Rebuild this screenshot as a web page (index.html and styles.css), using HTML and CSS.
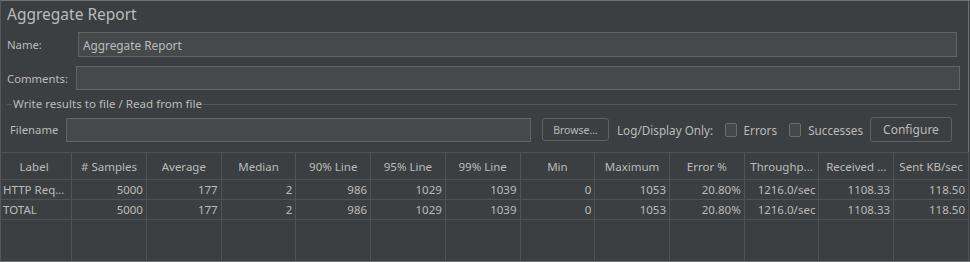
FILE: index.html
```html
<!DOCTYPE html>
<html lang="en">
<head>
    <meta charset="UTF-8">
    <title>Aggregate Report</title>
    <link rel="stylesheet" href="styles.css">
</head>
<body>
    <div class="window">
        <div class="settings">
            <h1 class="title">Aggregate Report</h1>

            <div class="form-row name-row">
                <label class="row-label">Name:</label>
                <input class="field" type="text" value="Aggregate Report">
            </div>
            <div class="form-row comments-row">
                <label class="row-label">Comments:</label>
                <input class="field" type="text">
            </div>

            <fieldset class="file-box">
                <legend>Write results to file / Read from file</legend>
                <div class="file-row">
                    <label class="file-label">Filename</label>
                    <input class="field file-field" type="text">
                    <button class="btn browse-btn">Browse...</button>
                    <span class="log-label">Log/Display Only:</span>
                    <label class="check check-errors"><span class="box"></span>Errors</label>
                    <label class="check check-successes"><span class="box"></span>Successes</label>
                    <button class="btn configure-btn">Configure</button>
                </div>
            </fieldset>
        </div>

        <table class="report">
            <thead>
                <tr>
                    <th>Label</th>
                    <th># Samples</th>
                    <th>Average</th>
                    <th>Median</th>
                    <th>90% Line</th>
                    <th>95% Line</th>
                    <th>99% Line</th>
                    <th>Min</th>
                    <th>Maximum</th>
                    <th>Error %</th>
                    <th>Throughp...</th>
                    <th>Received ...</th>
                    <th>Sent KB/sec</th>
                </tr>
            </thead>
            <tbody>
                <tr>
                    <td class="name">HTTP Req...</td>
                    <td>5000</td>
                    <td>177</td>
                    <td>2</td>
                    <td>986</td>
                    <td>1029</td>
                    <td>1039</td>
                    <td>0</td>
                    <td>1053</td>
                    <td>20.80%</td>
                    <td>1216.0/sec</td>
                    <td>1108.33</td>
                    <td>118.50</td>
                </tr>
                <tr>
                    <td class="name">TOTAL</td>
                    <td>5000</td>
                    <td>177</td>
                    <td>2</td>
                    <td>986</td>
                    <td>1029</td>
                    <td>1039</td>
                    <td>0</td>
                    <td>1053</td>
                    <td>20.80%</td>
                    <td>1216.0/sec</td>
                    <td>1108.33</td>
                    <td>118.50</td>
                </tr>
                <tr class="filler">
                    <td></td><td></td><td></td><td></td><td></td><td></td><td></td>
                    <td></td><td></td><td></td><td></td><td></td><td></td>
                </tr>
            </tbody>
        </table>
    </div>
</body>
</html>
```

FILE: styles.css
```css
body {
    margin: 0;
    background-color: #3c3f41;
    font-family: "Noto Sans", "Open Sans", sans-serif;
    font-size: 12px;
    color: #bbbbbb;
}
.window {
    width: 970px;
    height: 262px;
    overflow: hidden;
    box-sizing: border-box;
    border-top: 1px solid #6e7072;
    border-bottom: 1px solid #6e7072;
    border-left: 1px solid #55585a;
}
.settings {
    width: 967px;
    height: 151px;
    border-right: 1px solid #6e7072;
}
.title {
    margin: 0;
    padding: 3px 0 0 6px;
    height: 28px;
    font-size: 15.5px;
    font-weight: normal;
    line-height: 21px;
    color: #bbbbbb;
}
.form-row {
    display: flex;
    align-items: center;
    padding-left: 6px;
}
.form-row > * {
    flex-shrink: 0;
}
.row-label {
    font-size: 11.3px;
}
.field {
    box-sizing: border-box;
    background-color: #45494a;
    border: 1px solid #646464;
    color: #bbbbbb;
    font-family: inherit;
    font-size: 11.8px;
    padding: 0 4px;
    outline: none;
}
.name-row {
    height: 25px;
}
.name-row .row-label {
    width: 71px;
}
.name-row .field {
    width: 879px;
    height: 25px;
}
.comments-row {
    height: 24px;
    margin-top: 9px;
}
.comments-row .row-label {
    width: 69px;
}
.comments-row .field {
    width: 884px;
    height: 24px;
}
.file-box {
    margin: 6px 0 0 6px;
    width: 950px;
    padding: 0;
    border: none;
    border-top: 1px solid #56595b;
}
.file-box legend {
    padding: 0 1px;
    margin-left: 5px;
    font-size: 11.6px;
    line-height: 16px;
}
.file-row {
    display: flex;
    align-items: center;
    height: 25px;
    margin-top: 5px;
    white-space: nowrap;
}
.file-row > * {
    flex-shrink: 0;
}
.file-label {
    width: 56px;
    padding-left: 3px;
    font-size: 11.3px;
}
.file-field {
    width: 465px;
    height: 24px;
}
.btn {
    box-sizing: border-box;
    background-color: #3c3f41;
    border: 1px solid #5e6060;
    border-radius: 3px;
    color: #bbbbbb;
    font-family: inherit;
    padding: 0;
}
.browse-btn {
    width: 67px;
    height: 23px;
    margin-left: 11px;
    font-size: 10.5px;
}
.log-label {
    width: 96px;
    margin-left: 8px;
    font-size: 11.7px;
}
.check {
    display: flex;
    align-items: center;
    margin-left: 12px;
    font-size: 11.7px;
}
.check-errors {
    width: 52px;
}
.check-successes {
    width: 74px;
}
.box {
    display: inline-block;
    box-sizing: border-box;
    width: 14px;
    height: 14px;
    margin-right: 7px;
    background-color: #43494a;
    border: 1px solid #6b6b6b;
    border-radius: 2px;
}
.configure-btn {
    width: 82px;
    height: 25px;
    margin-left: 7px;
    font-size: 12px;
}
.report {
    width: 972px;
    table-layout: fixed;
    border-collapse: collapse;
    margin-left: -4px;
}
.report th,
.report td {
    border-right: 1px solid #505355;
    padding: 0 3px;
    white-space: nowrap;
    overflow: hidden;
    font-size: 11.5px;
}
.report th {
    height: 26px;
    font-weight: normal;
    text-align: center;
    border-top: 1px solid #505355;
    border-bottom: 1px solid #505355;
}
.report td {
    height: 19px;
    text-align: right;
    border-bottom: 1px solid #505355;
}
.report td.name {
    text-align: left;
    padding-left: 6px;
}
.report .filler td {
    height: 42px;
    border-bottom: none;
}
```
